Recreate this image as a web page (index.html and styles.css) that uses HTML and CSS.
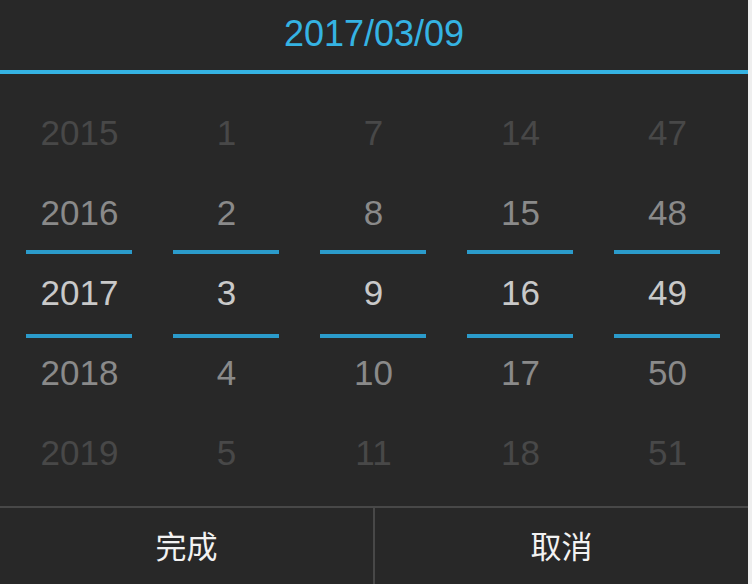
FILE: index.html
```html
<!DOCTYPE html>
<html lang="zh">
<head>
<meta charset="utf-8">
<link rel="stylesheet" href="styles.css">
</head>
<body>
<div class="picker">
  <div class="header">2017/03/09</div>
  <div class="wheels">
    <div class="col">
      <div class="item far">2015</div>
      <div class="item near">2016</div>
      <div class="item sel">2017</div>
      <div class="item near">2018</div>
      <div class="item far">2019</div>
    </div>
    <div class="col">
      <div class="item far">1</div>
      <div class="item near">2</div>
      <div class="item sel">3</div>
      <div class="item near">4</div>
      <div class="item far">5</div>
    </div>
    <div class="col">
      <div class="item far">7</div>
      <div class="item near">8</div>
      <div class="item sel">9</div>
      <div class="item near">10</div>
      <div class="item far">11</div>
    </div>
    <div class="col">
      <div class="item far">14</div>
      <div class="item near">15</div>
      <div class="item sel">16</div>
      <div class="item near">17</div>
      <div class="item far">18</div>
    </div>
    <div class="col">
      <div class="item far">47</div>
      <div class="item near">48</div>
      <div class="item sel">49</div>
      <div class="item near">50</div>
      <div class="item far">51</div>
    </div>
  </div>
  <div class="footer">
    <div class="btn">完成</div>
    <div class="divider"></div>
    <div class="btn">取消</div>
  </div>
</div>
</body>
</html>
```
FILE: styles.css
```css
html, body {
  margin: 0;
  padding: 0;
  background: #efefef;
}
body {
  width: 752px;
  height: 584px;
  overflow: hidden;
  font-family: "Liberation Sans", Arial, sans-serif;
}
.picker {
  width: 748px;
  height: 584px;
  background: #282828;
  display: flex;
  flex-direction: column;
}
.header {
  height: 68px;
  padding-bottom: 2px;
  line-height: 68px;
  text-align: center;
  font-size: 36px;
  color: #35b3e3;
  border-bottom: 4px solid #35b3e3;
}
.wheels {
  height: 432px;
  box-sizing: border-box;
  padding: 19px 0 0 6px;
  display: flex;
}
.col {
  width: 147px;
  display: flex;
  flex-direction: column;
}
.item {
  height: 80px;
  line-height: 80px;
  text-align: center;
  font-size: 35px;
  position: relative;
}
.far { color: #484848; }
.near { color: #8a8a8a; }
.sel { color: #c9c9c9; }
.sel::before,
.sel::after {
  content: "";
  position: absolute;
  left: 20px;
  right: 21px;
  height: 4px;
  background: #2b9bcb;
}
.sel::before { top: -3px; }
.sel::after { bottom: -5px; }
.footer {
  flex: 1;
  display: flex;
  border-top: 2px solid #484848;
}
.btn {
  flex: 1;
  display: flex;
  align-items: center;
  justify-content: center;
  padding-bottom: 3px;
  font-family: "Noto Sans CJK SC", sans-serif;
  font-size: 31px;
  color: #f2f2f2;
}
.divider {
  width: 2px;
  background: #484848;
}
```
